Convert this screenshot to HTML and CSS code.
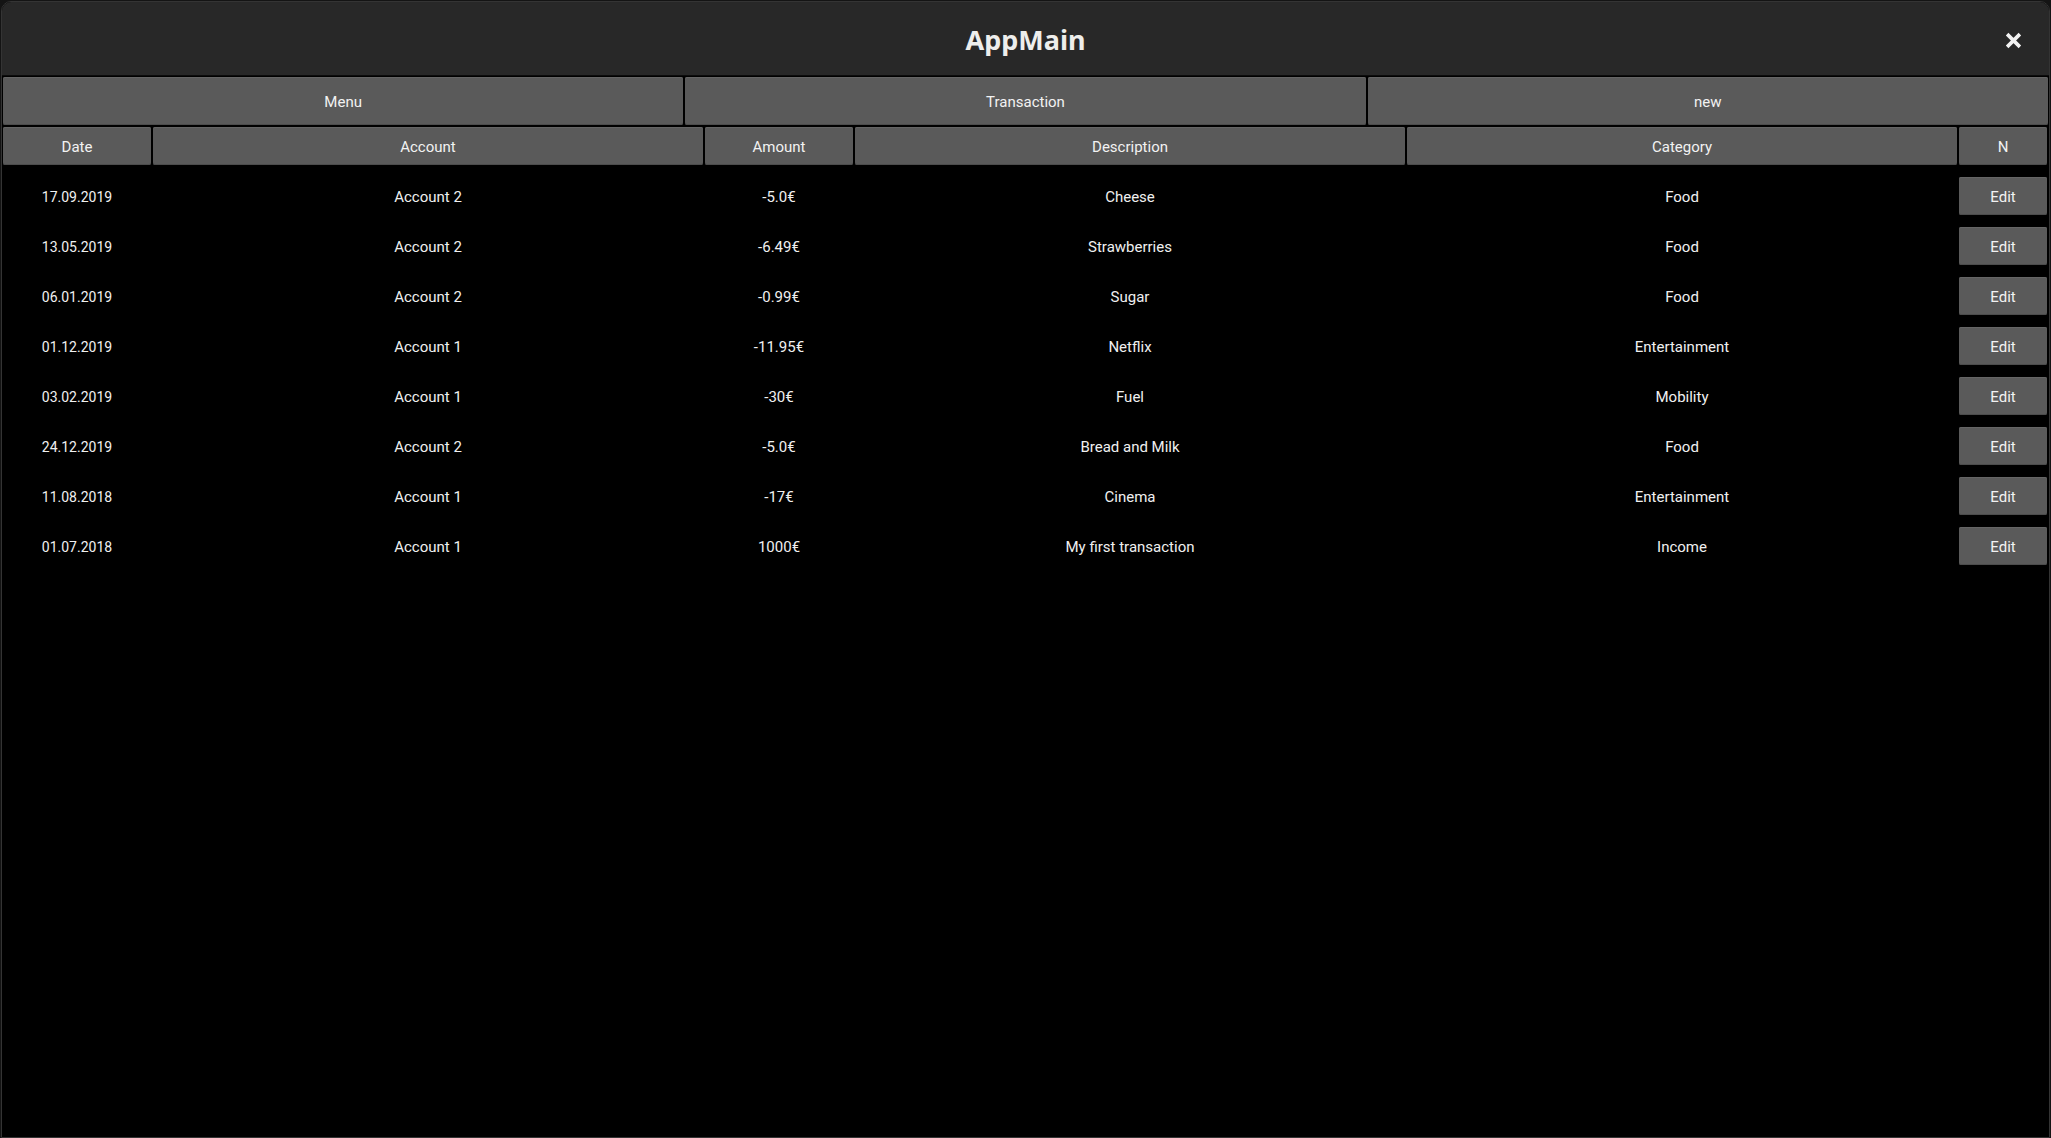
FILE: index.html
```html
<!DOCTYPE html>
<html>
<head>
<meta charset="utf-8">
<title>AppMain</title>
<link rel="stylesheet" href="styles.css">
</head>
<body>
<div class="window">
  <div class="titlebar">
    <span class="title">AppMain</span>
    <span class="close">
      <svg width="17" height="17" viewBox="0 0 16 16"><path d="M2 2 L14 14 M14 2 L2 14" stroke="#f2f2f2" stroke-width="3.4" stroke-linecap="butt"/></svg>
    </span>
  </div>
  <div class="toolbar">
    <div class="btn">Menu</div>
    <div class="btn">Transaction</div>
    <div class="btn">new</div>
  </div>
  <div class="grid header">
    <div class="btn">Date</div>
    <div class="btn">Account</div>
    <div class="btn">Amount</div>
    <div class="btn">Description</div>
    <div class="btn">Category</div>
    <div class="btn">N</div>
  </div>
  <div class="rows">
    <div class="grid row"><div class="date">17.09.2019</div><div>Account 2</div><div>-5.0€</div><div>Cheese</div><div>Food</div><div class="btn">Edit</div></div>
    <div class="grid row"><div class="date">13.05.2019</div><div>Account 2</div><div>-6.49€</div><div>Strawberries</div><div>Food</div><div class="btn">Edit</div></div>
    <div class="grid row"><div class="date">06.01.2019</div><div>Account 2</div><div>-0.99€</div><div>Sugar</div><div>Food</div><div class="btn">Edit</div></div>
    <div class="grid row"><div class="date">01.12.2019</div><div>Account 1</div><div>-11.95€</div><div>Netflix</div><div>Entertainment</div><div class="btn">Edit</div></div>
    <div class="grid row"><div class="date">03.02.2019</div><div>Account 1</div><div>-30€</div><div>Fuel</div><div>Mobility</div><div class="btn">Edit</div></div>
    <div class="grid row"><div class="date">24.12.2019</div><div>Account 2</div><div>-5.0€</div><div>Bread and Milk</div><div>Food</div><div class="btn">Edit</div></div>
    <div class="grid row"><div class="date">11.08.2018</div><div>Account 1</div><div>-17€</div><div>Cinema</div><div>Entertainment</div><div class="btn">Edit</div></div>
    <div class="grid row"><div class="date">01.07.2018</div><div>Account 1</div><div>1000€</div><div>My first transaction</div><div>Income</div><div class="btn">Edit</div></div>
  </div>
</div>
</body>
</html>
```

FILE: styles.css
```css
html, body {
  margin: 0;
  padding: 0;
  background: #141414;
  height: 100%;
}
body {
  font-family: Roboto, "Liberation Sans", sans-serif;
  font-size: 15px;
  color: #f0f0f0;
}
.window {
  box-sizing: border-box;
  margin: 1px 0 0 1px;
  width: 2049px;
  height: 1137px;
  border: 1px solid #343434;
  border-radius: 10px 10px 0 0;
  background: #000;
  overflow: hidden;
  display: flex;
  flex-direction: column;
}
.titlebar {
  position: relative;
  height: 73px;
  flex: none;
  background: #282828;
  border-bottom: 1px solid #0c0c0c;
  display: flex;
  align-items: center;
  justify-content: center;
}
.title {
  font-family: "Noto Sans", "Open Sans", sans-serif;
  font-weight: 700;
  font-size: 27px;
  color: #eeeeec;
  margin-top: 2px;
}
.close {
  position: absolute;
  right: 27px;
  top: 30px;
  width: 17px;
  height: 17px;
  display: flex;
}
.toolbar {
  display: flex;
  gap: 2px;
  padding: 1px 1px 0 1px;
  height: 48px;
  flex: none;
}
.toolbar .btn {
  flex: 1;
}
.btn {
  background: #5a5a5a;
  border-radius: 2px;
  box-shadow: inset 0 1px #656565, inset 0 -1px #4c4c4c;
  display: flex;
  align-items: center;
  justify-content: center;
  color: #f2f2f2;
  padding-top: 1px;
  box-sizing: border-box;
}
.grid {
  display: grid;
  grid-template-columns: 148px 550px 148px 550px 550px 88px;
  gap: 2px;
  padding: 0 1px;
}
.header {
  margin-top: 2px;
  height: 38px;
  flex: none;
}
.rows {
  display: flex;
  flex-direction: column;
  gap: 12px;
  padding-top: 12px;
}
.row {
  height: 38px;
}
.row > div {
  display: flex;
  align-items: center;
  justify-content: center;
  padding-top: 1px;
  box-sizing: border-box;
}
.row > .date {
  font-size: 14px;
}
```
